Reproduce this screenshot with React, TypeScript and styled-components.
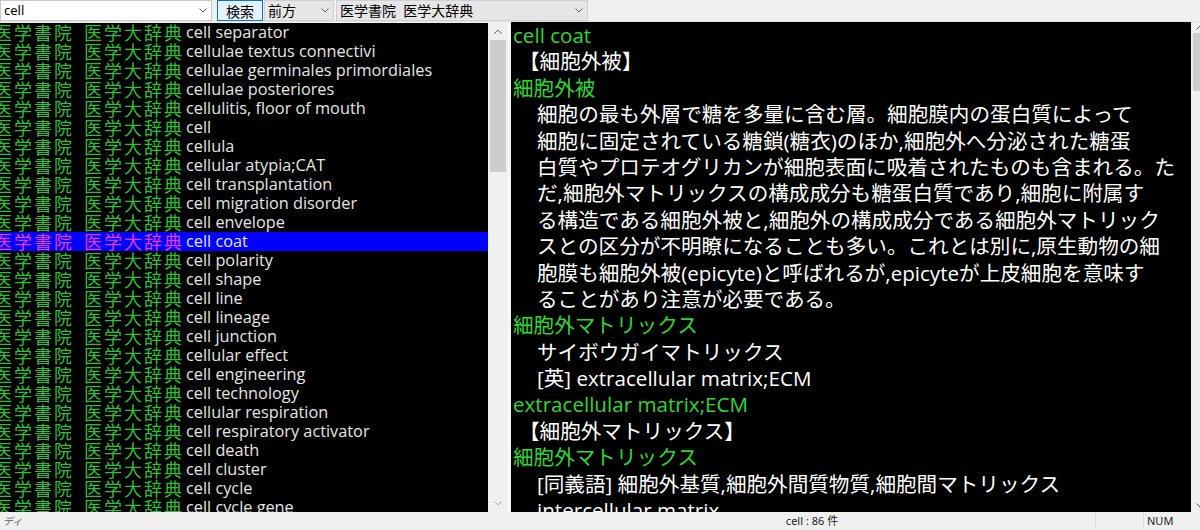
import React from 'react';
import styled, { createGlobalStyle } from 'styled-components';

const GlobalStyle = createGlobalStyle`
  html, body { margin: 0; padding: 0; background: #f0f0f0; overflow: hidden; }
  #root { width: 1200px; height: 530px; }
`;

const Window = styled.div`
  width: 1200px;
  height: 530px;
  display: flex;
  flex-direction: column;
  overflow: hidden;
  background: #f0f0f0;
  font-family: "Noto Sans", "Noto Sans CJK JP", sans-serif;
`;

const Toolbar = styled.div`
  flex: 0 0 22px;
  height: 22px;
  display: flex;
  align-items: flex-start;
  box-sizing: border-box;
  border-bottom: 1px solid #e3e3e3;
`;

const Combo = styled.div<{ $w: number; $bg: string; $ml?: number; $border: string }>`
  width: ${p => p.$w}px;
  margin-left: ${p => p.$ml ?? 0}px;
  height: 21px;
  box-sizing: border-box;
  background: ${p => p.$bg};
  border: 1px solid ${p => p.$border};
  display: flex;
  align-items: center;
  padding: 0 4px 0 3px;
  color: #000;
`;

const ComboText = styled.span<{ $size: number }>`
  flex: 1;
  font-size: ${p => p.$size}px;
  font-family: "Noto Sans", "Noto Sans CJK JP", sans-serif;
  white-space: nowrap;
  line-height: 19px;
`;

const Button = styled.div`
  width: 46px;
  height: 21px;
  margin-left: 5px;
  box-sizing: border-box;
  border: 1px solid #0078d7;
  background: #e5f1fb;
  display: flex;
  align-items: center;
  justify-content: center;
  font-size: 14px;
  font-family: "Noto Sans CJK JP", sans-serif;
  color: #000;
`;

const Chevron = ({ up, color = '#606060' }: { up?: boolean; color?: string }) => (
  <svg width="8" height="5" viewBox="0 0 8 5" style={{ flex: '0 0 auto' }}>
    <path d={up ? 'M0.5 4.5 L4 1 L7.5 4.5' : 'M0.5 0.5 L4 4 L7.5 0.5'} fill="none" stroke={color} strokeWidth="1" />
  </svg>
);

const Main = styled.div`
  flex: 0 0 490px;
  height: 490px;
  display: flex;
  overflow: hidden;
`;

const LeftPane = styled.div`
  flex: 0 0 508px;
  display: flex;
  padding-top: 1px;
  box-sizing: border-box;
`;

const List = styled.div`
  flex: 1;
  background: #000;
  overflow: hidden;
  display: flex;
  flex-direction: column;
`;

const Row = styled.div<{ $sel?: boolean }>`
  flex: 0 0 19px;
  height: 19px;
  display: flex;
  align-items: center;
  background: ${p => (p.$sel ? '#0000ff' : 'transparent')};
  white-space: nowrap;
`;

const Kanji = styled.span<{ $sel?: boolean; $w: number; $ml?: number }>`
  flex: 0 0 ${p => p.$w}px;
  margin-left: ${p => p.$ml ?? 0}px;
  font-family: "Noto Sans CJK JP", sans-serif;
  font-size: 18px;
  letter-spacing: 2px;
  line-height: 19px;
  color: ${p => (p.$sel ? '#e23be2' : '#2fbf35')};
  overflow: visible;
`;

const Eng = styled.span`
  font-family: "Open Sans", "Noto Sans", sans-serif;
  font-size: 16.3px;
  line-height: 19px;
  color: #e6e6e6;
`;

const ScrollBar = styled.div<{ $w: number }>`
  flex: 0 0 ${p => p.$w}px;
  width: ${p => p.$w}px;
  background: #f0f0f0;
  display: flex;
  flex-direction: column;
`;

const ArrowBox = styled.div<{ $h: number }>`
  flex: 0 0 ${p => p.$h}px;
  display: flex;
  align-items: center;
  justify-content: center;
`;

const Thumb = styled.div<{ $h: number }>`
  flex: 0 0 ${p => p.$h}px;
  margin: 0 2px;
  background: #cdcdcd;
`;

const Track = styled.div`
  flex: 1;
`;

const Splitter = styled.div`
  flex: 0 0 3px;
  background: #f0f0f0;
  border-left: 1px solid #ffffff;
  box-sizing: border-box;
`;

const RightPane = styled.div`
  flex: 0 0 697px;
  display: flex;
`;

const Content = styled.div`
  flex: 0 0 680px;
  background: #000;
  overflow: hidden;
  padding: 0 0 0 2px;
  box-sizing: border-box;
  font-family: "Open Sans", "Noto Sans CJK JP", sans-serif;
  font-size: 20.6px;
`;

const Line = styled.div<{ $green?: boolean; $indent?: number }>`
  height: 26.4px;
  line-height: 26.4px;
  color: ${p => (p.$green ? '#2ed82e' : '#ffffff')};
  padding-left: ${p => p.$indent ?? 0}px;
  white-space: nowrap;
`;

const Body = styled.div`
  padding-left: 24px;
  color: #fff;
`;

const BodyLine = styled.div`
  height: 26.4px;
  line-height: 26.4px;
  white-space: nowrap;
`;

const StatusBar = styled.div`
  flex: 0 0 18px;
  height: 18px;
  display: flex;
  align-items: center;
  font-family: "Noto Sans", "Noto Sans CJK JP", sans-serif;
  font-size: 11px;
  color: #222;
  background: #f0f0f0;
`;

const StatusPane = styled.div<{ $w?: number; $center?: boolean; $sep?: boolean }>`
  ${p => (p.$w ? `flex: 0 0 ${p.$w}px;` : 'flex: 1;')}
  height: 16px;
  line-height: 16px;
  display: flex;
  align-items: center;
  justify-content: ${p => (p.$center ? 'center' : 'flex-start')};
  border-left: ${p => (p.$sep ? '1px solid #dcdcdc' : 'none')};
  box-sizing: border-box;
  padding-left: ${p => (p.$center ? 0 : 3)}px;
  white-space: nowrap;
  overflow: hidden;
`;

const Faint = styled.span`
  font-style: italic;
  font-size: 10px;
  color: #555;
`;

const rows = [
  'cell separator',
  'cellulae textus connectivi',
  'cellulae germinales primordiales',
  'cellulae posteriores',
  'cellulitis, floor of mouth',
  'cell',
  'cellula',
  'cellular atypia;CAT',
  'cell transplantation',
  'cell migration disorder',
  'cell envelope',
  'cell coat',
  'cell polarity',
  'cell shape',
  'cell line',
  'cell lineage',
  'cell junction',
  'cellular effect',
  'cell engineering',
  'cell technology',
  'cellular respiration',
  'cell respiratory activator',
  'cell death',
  'cell cluster',
  'cell cycle',
  'cell cycle gene',
];

const bodyLines = [
  '細胞の最も外層で糖を多量に含む層。細胞膜内の蛋白質によって',
  '細胞に固定されている糖鎖(糖衣)のほか,細胞外へ分泌された糖蛋',
  '白質やプロテオグリカンが細胞表面に吸着されたものも含まれる。た',
  'だ,細胞外マトリックスの構成成分も糖蛋白質であり,細胞に附属す',
  'る構造である細胞外被と,細胞外の構成成分である細胞外マトリック',
  'スとの区分が不明瞭になることも多い。これとは別に,原生動物の細',
  '胞膜も細胞外被(epicyte)と呼ばれるが,epicyteが上皮細胞を意味す',
  'ることがあり注意が必要である。',
];

export default function App() {
  return (
    <>
      <GlobalStyle />
      <Window>
        <Toolbar>
          <Combo $w={212} $bg="#ffffff" $border="#c8c8c8">
            <ComboText $size={13}>cell</ComboText>
            <Chevron />
          </Combo>
          <Button>検索</Button>
          <Combo $w={70} $ml={1} $bg="#e6e6e6" $border="#d0d0d0">
            <ComboText $size={14}>前方</ComboText>
            <Chevron />
          </Combo>
          <Combo $w={252} $ml={2} $bg="#e6e6e6" $border="#d0d0d0">
            <ComboText $size={14}>医学書院&nbsp;&nbsp;医学大辞典</ComboText>
            <Chevron />
          </Combo>
        </Toolbar>
        <Main>
          <LeftPane>
            <List>
              {rows.map((r, i) => {
                const sel = r === 'cell coat';
                return (
                  <Row key={i} $sel={sel}>
                    <Kanji $sel={sel} $w={90} $ml={-6}>医学書院</Kanji>
                    <Kanji $sel={sel} $w={102}>医学大辞典</Kanji>
                    <Eng>{r}</Eng>
                  </Row>
                );
              })}
            </List>
            <ScrollBar $w={20}>
              <ArrowBox $h={17}><Chevron up /></ArrowBox>
              <Thumb $h={132} />
              <Track />
              <ArrowBox $h={17}><Chevron color="#b0b0b0" /></ArrowBox>
            </ScrollBar>
          </LeftPane>
          <Splitter />
          <RightPane>
            <Content>
              <Line $green>cell coat</Line>
              <Line $indent={6}>【細胞外被】</Line>
              <Line $green>細胞外被</Line>
              <Body>
                {bodyLines.map((l, i) => (
                  <BodyLine key={i}>{l}</BodyLine>
                ))}
              </Body>
              <Line $green>細胞外マトリックス</Line>
              <Line $indent={24}>サイボウガイマトリックス</Line>
              <Line $indent={24}>[英] extracellular matrix;ECM</Line>
              <Line $green>extracellular matrix;ECM</Line>
              <Line $indent={6}>【細胞外マトリックス】</Line>
              <Line $green>細胞外マトリックス</Line>
              <Line $indent={24}>[同義語] 細胞外基質,細胞外間質物質,細胞間マトリックス</Line>
              <Line $indent={24}>intercellular matrix</Line>
            </Content>
            <ScrollBar $w={17}>
              <ArrowBox $h={11}><Chevron up /></ArrowBox>
              <Thumb $h={58} />
              <Track />
              <ArrowBox $h={14}><Chevron /></ArrowBox>
            </ScrollBar>
          </RightPane>
        </Main>
        <StatusBar>
          <StatusPane $w={529}><Faint>ディ</Faint></StatusPane>
          <StatusPane $w={566} $center>cell : 86 件</StatusPane>
          <StatusPane $w={48} $sep />
          <StatusPane $sep>NUM</StatusPane>
        </StatusBar>
      </Window>
    </>
  );
}
